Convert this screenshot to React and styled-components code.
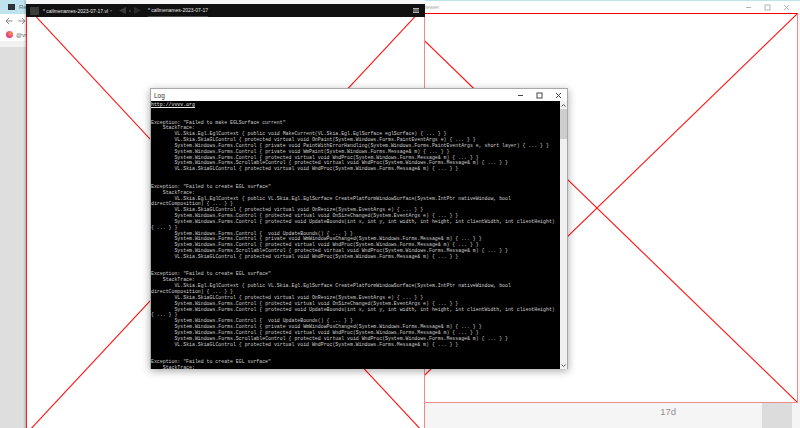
import React from 'react';
import styled, { createGlobalStyle } from 'styled-components';

const GlobalStyle = createGlobalStyle`
    html, body {
        margin: 0;
        padding: 0;
        background: #f5f5f5;
    }
`;

const stackOne = [
    'VL.Skia.Egl.EglContext { public void MakeCurrent(VL.Skia.Egl.EglSurface eglSurface) { ... } }',
    'VL.Skia.SkiaGLControl { protected virtual void OnPaint(System.Windows.Forms.PaintEventArgs e) { ... } }',
    'System.Windows.Forms.Control { private void PaintWithErrorHandling(System.Windows.Forms.PaintEventArgs e, short layer) { ... } }',
    'System.Windows.Forms.Control { private void WmPaint(System.Windows.Forms.Message& m) { ... } }',
    'System.Windows.Forms.Control { protected virtual void WndProc(System.Windows.Forms.Message& m) { ... } }',
    'System.Windows.Forms.ScrollableControl { protected virtual void WndProc(System.Windows.Forms.Message& m) { ... } }',
    'VL.Skia.SkiaGLControl { protected virtual void WndProc(System.Windows.Forms.Message& m) { ... } }',
];

const stackTwo = [
    'VL.Skia.Egl.EglContext { public VL.Skia.Egl.EglSurface CreatePlatformWindowSurface(System.IntPtr nativeWindow, bool directComposition) { ... } }',
    'VL.Skia.SkiaGLControl { protected virtual void OnResize(System.EventArgs e) { ... } }',
    'System.Windows.Forms.Control { protected virtual void OnSizeChanged(System.EventArgs e) { ... } }',
    'System.Windows.Forms.Control { protected void UpdateBounds(int x, int y, int width, int height, int clientWidth, int clientHeight) { ... } }',
    'System.Windows.Forms.Control {  void UpdateBounds() { ... } }',
    'System.Windows.Forms.Control { private void WmWindowPosChanged(System.Windows.Forms.Message& m) { ... } }',
    'System.Windows.Forms.Control { protected virtual void WndProc(System.Windows.Forms.Message& m) { ... } }',
    'System.Windows.Forms.ScrollableControl { protected virtual void WndProc(System.Windows.Forms.Message& m) { ... } }',
    'VL.Skia.SkiaGLControl { protected virtual void WndProc(System.Windows.Forms.Message& m) { ... } }',
];

const LogEntry = ({ message, stack }) => (
    <Entry>
        <LogLine>Exception: "{message}"</LogLine>
        <LogLine $indent={4}>StackTrace:</LogLine>
        {stack.map((line, i) => (
            <LogLine key={i} $indent={8}>{line}</LogLine>
        ))}
    </Entry>
);

const Cross = ({ $left }) => (
    <CrossBox $left={$left}>
        <svg width="100%" height="100%" viewBox="0 0 100 100" preserveAspectRatio="none">
            <line x1="0" y1="0" x2="100" y2="100" stroke="#ff1010" strokeWidth="1.1" vectorEffect="non-scaling-stroke" />
            <line x1="100" y1="0" x2="0" y2="100" stroke="#ff1010" strokeWidth="1.1" vectorEffect="non-scaling-stroke" />
        </svg>
    </CrossBox>
);

const WindowButtons = ({ color }) => (
    <Buttons>
        <svg width="7" height="7" viewBox="0 0 7 7"><path d="M1 3.5h5" stroke={color} /></svg>
        <svg width="7" height="7" viewBox="0 0 7 7"><rect x="1" y="1" width="5" height="5" fill="none" stroke={color} /></svg>
        <svg width="7" height="7" viewBox="0 0 7 7"><path d="M1 1l5 5M6 1L1 6" stroke={color} /></svg>
    </Buttons>
);

export default function App() {
    return (
        <Desktop>
            <GlobalStyle />

            <Browser>
                <TabStrip>
                    <TabIcon />
                    <TabLabel>Ref</TabLabel>
                </TabStrip>
                <NavRow>
                    <svg width="8" height="8" viewBox="0 0 8 8"><path d="M7.5 4H1M4 1L1 4l3 3" fill="none" stroke="#8a8a8a" /></svg>
                    <svg width="8" height="8" viewBox="0 0 8 8"><path d="M0.5 4H7M4 1l3 3-3 3" fill="none" stroke="#8a8a8a" /></svg>
                </NavRow>
                <BookmarkRow>
                    <BookmarkIcon />
                    <BookmarkLabel>@vv</BookmarkLabel>
                </BookmarkRow>
                <PageArea>
                    <Gutter />
                    <TopicColumn>
                        <TopicRow>
                            <Age>17d</Age>
                            <ProgressBlock />
                        </TopicRow>
                    </TopicColumn>
                </PageArea>
            </Browser>

            <ViewerWindow>
                <ViewerTitle>
                    <ViewerName>Viewer</ViewerName>
                    <WindowButtons color="#b4b4b4" />
                </ViewerTitle>
                <Cross />
            </ViewerWindow>

            <PatchWindow>
                <PatchBar>
                    <PatchIcon />
                    <DocName>* callmenames-2023-07-17.vl</DocName>
                    <Chevron>▾</Chevron>
                    <NavGroup>
                        <svg width="7" height="7" viewBox="0 0 7 7"><path d="M7 0v7L0 3.5z" fill="#3c3c3c" /></svg>
                        <NavDot />
                        <svg width="7" height="7" viewBox="0 0 7 7"><path d="M0 0v7l7-3.5z" fill="#2c2c2c" /></svg>
                    </NavGroup>
                    <ActiveTab>* callmenames-2023-07-17</ActiveTab>
                    <Burger />
                </PatchBar>
                <Cross $left />
            </PatchWindow>

            <LogWindow>
                <LogTitle>
                    <LogName>Log</LogName>
                    <WindowButtons color="#444444" />
                </LogTitle>
                <LogBody>
                    <LogText>
                        <LogLink>http://vvvv.org</LogLink>
                        <LogEntry message="Failed to make EGLSurface current" stack={stackOne} />
                        <LogEntry message="Failed to create EGL surface" stack={stackTwo} />
                        <LogEntry message="Failed to create EGL surface" stack={stackTwo} />
                        <LogEntry message="Failed to create EGL surface" stack={[]} />
                    </LogText>
                    <Scrollbar>
                        <ScrollArrow>
                            <svg width="5" height="3" viewBox="0 0 5 3"><path d="M0.5 2.5l2-2 2 2" fill="none" stroke="#555" /></svg>
                        </ScrollArrow>
                        <ScrollTrack>
                            <ScrollThumb />
                        </ScrollTrack>
                        <ScrollArrow>
                            <svg width="5" height="3" viewBox="0 0 5 3"><path d="M0.5 0.5l2 2 2-2" fill="none" stroke="#555" /></svg>
                        </ScrollArrow>
                    </Scrollbar>
                </LogBody>
            </LogWindow>
        </Desktop>
    );
}

const Desktop = styled.div`
    position: relative;
    width: 800px;
    height: 428px;
    overflow: hidden;
    font-family: "Liberation Sans", Arial, sans-serif;
`;

/* browser behind the windows */
const Browser = styled.div`
    display: flex;
    flex-direction: column;
    width: 100%;
    height: 100%;
`;

const TabStrip = styled.div`
    display: flex;
    align-items: center;
    gap: 4px;
    height: 14px;
    padding-left: 8px;
    background: #bfe3ee;
`;

const TabIcon = styled.div`
    width: 7px;
    height: 6px;
    background: #2b3238;
`;

const TabLabel = styled.span`
    font-size: 6px;
    color: #55707a;
`;

const NavRow = styled.div`
    display: flex;
    align-items: center;
    gap: 5px;
    height: 14px;
    padding-left: 5px;
    background: #ffffff;
`;

const BookmarkRow = styled.div`
    display: flex;
    align-items: center;
    gap: 3px;
    height: 13px;
    padding-left: 6px;
    background: #ffffff;
`;

const BookmarkIcon = styled.div`
    width: 7px;
    height: 7px;
    border-radius: 50%;
    background: radial-gradient(circle at 65% 35%, #f5a030, #e8388c 60%, #8a3fd0);
`;

const BookmarkLabel = styled.span`
    font-size: 6px;
    color: #666666;
`;

const PageArea = styled.div`
    flex: 1;
    display: flex;
    background: #f5f5f5;
    border-top: 6px solid #f2f2f2;
`;

const Gutter = styled.div`
    width: 26px;
    background: #dedede;
`;

const TopicColumn = styled.div`
    flex: 1;
    display: flex;
    flex-direction: column;
    justify-content: flex-end;
`;

const TopicRow = styled.div`
    display: flex;
    justify-content: flex-end;
    height: 25px;
    padding-right: 8px;
`;

const Age = styled.span`
    margin-right: 86px;
    padding-top: 2px;
    font-size: 9.5px;
    line-height: 14px;
    color: #8f8f8f;
`;

const ProgressBlock = styled.div`
    width: 30px;
    background: #dcdcdc;
`;

/* windows on the desktop */
const ViewerWindow = styled.div`
    position: absolute;
    left: 397px;
    top: 1px;
    width: 403px;
    display: flex;
    flex-direction: column;
    background: #f5f5f5;
`;

const ViewerTitle = styled.div`
    display: flex;
    align-items: center;
    justify-content: space-between;
    height: 12px;
    padding: 0 10px 0 24px;
    background: #ffffff;
`;

const ViewerName = styled.span`
    font-size: 6px;
    color: #a8a8a8;
`;

const Buttons = styled.div`
    display: flex;
    align-items: center;
    gap: 12px;
`;

const CrossBox = styled.div`
    box-sizing: border-box;
    background: #ffffff;
    ${(p) => (p.$left
        ? `
        width: 399px;
        height: 426px;
        border-left: 1px solid #ff2020;
        border-right: 1px solid #f08a8a;
    `
        : `
        width: 401px;
        height: 390px;
        border-top: 1px solid #ff0000;
        border-right: 1px solid #f08a8a;
        border-bottom: 1px solid #f08a8a;
    `)}

    svg {
        display: block;
    }
`;

const PatchWindow = styled.div`
    position: absolute;
    left: 26px;
    top: 0;
    width: 399px;
    padding-top: 7px;
    background: #f7f7f7;
    box-shadow: -1px 0 2px rgba(0, 0, 0, 0.25);
`;

const PatchBar = styled.div`
    position: absolute;
    top: 4px;
    left: 0;
    right: 0;
    height: 13px;
    display: flex;
    align-items: center;
    padding-left: 4px;
    background: #111111;
    color: #e8e8e8;
    font-size: 5px;
`;

const PatchIcon = styled.div`
    width: 9px;
    height: 8px;
    margin-right: 4px;
    background: #3a3a3a;
`;

const DocName = styled.span`
    width: 67px;
    white-space: nowrap;
`;

const Chevron = styled.span`
    width: 9px;
    color: #666666;
    font-size: 4px;
`;

const NavGroup = styled.div`
    display: flex;
    align-items: center;
    gap: 3px;
    width: 29px;
`;

const NavDot = styled.span`
    width: 2px;
    height: 2px;
    background: #333333;
`;

const ActiveTab = styled.span`
    align-self: stretch;
    display: flex;
    align-items: center;
    white-space: nowrap;
    border-bottom: 1px solid #444444;
`;

const Burger = styled.div`
    width: 6px;
    height: 3px;
    margin-left: auto;
    margin-right: 6px;
    border-top: 1px solid #b0b0b0;
    border-bottom: 1px solid #b0b0b0;
    background: #666666;
`;

const LogWindow = styled.div`
    position: absolute;
    left: 150px;
    top: 88px;
    width: 418px;
    height: 281px;
    box-sizing: border-box;
    display: flex;
    flex-direction: column;
    border: 1px solid #a8a8a8;
    border-bottom: none;
    background: #ffffff;
    box-shadow: 0 2px 8px rgba(0, 0, 0, 0.35);
`;

const LogTitle = styled.div`
    display: flex;
    align-items: center;
    justify-content: space-between;
    height: 12px;
    padding: 0 5px 0 3px;
`;

const LogName = styled.span`
    font-size: 6.5px;
    color: #333333;
`;

const LogBody = styled.div`
    flex: 1;
    display: flex;
    min-height: 0;
    background: #000000;
`;

const LogText = styled.div`
    flex: 1;
    min-width: 0;
    overflow: hidden;
    padding-top: 1px;
    font-family: "Liberation Mono", monospace;
    font-size: 4.88px;
    line-height: 5.85px;
    color: #cfcfcf;
`;

const LogLink = styled.div`
    padding-bottom: 11.7px;
    color: #e8e8e8;
    text-decoration: underline;
`;

const Entry = styled.div`
    padding-bottom: 11.7px;
`;

// long lines wrap back to the first column, so the indent only holds for the first row
const LogLine = styled.div`
    white-space: pre-wrap;
    text-indent: ${(p) => (p.$indent || 0) * 2.93}px;
`;

const Scrollbar = styled.div`
    width: 7px;
    display: flex;
    flex-direction: column;
    background: #f0f0f0;
`;

const ScrollArrow = styled.div`
    height: 8px;
    display: flex;
    align-items: center;
    justify-content: center;
`;

const ScrollTrack = styled.div`
    flex: 1;
`;

const ScrollThumb = styled.div`
    height: 30px;
    background: #cdcdcd;
`;
